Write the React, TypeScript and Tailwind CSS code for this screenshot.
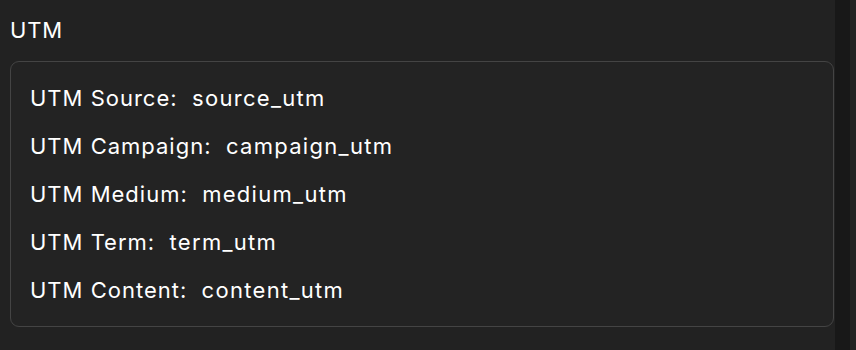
import React from "react";

const rows: [string, string][] = [
  ["UTM Source:", "source_utm"],
  ["UTM Campaign:", "campaign_utm"],
  ["UTM Medium:", "medium_utm"],
  ["UTM Term:", "term_utm"],
  ["UTM Content:", "content_utm"],
];

export default function App() {
  return (
    <div className="w-[856px] h-[350px] bg-[#222222] flex overflow-hidden" style={{ fontFamily: "Inter, 'Noto Sans', sans-serif" }}>
      <div className="w-[835px] pl-[10px] pr-[1px] pt-[16px]">
        <div className="text-[22px] leading-[28px] tracking-[0.9px] text-white">UTM</div>
        <div className="mt-[17px] h-[266px] rounded-[9px] border border-[#444444] bg-[#232323] px-[19px] pt-[12px] flex flex-col">
          {rows.map(([k, v]) => (
            <div key={k} className="h-[48px] flex items-center text-[22px] text-white whitespace-pre">
              <span className="tracking-[1px]">{k}  </span>
              <span className="tracking-[1.3px]">{v}</span>
            </div>
          ))}
        </div>
      </div>
      <div className="w-[15px] h-full bg-[#181818]" />
      <div className="flex-1 h-full bg-[#232323]" />
    </div>
  );
}
